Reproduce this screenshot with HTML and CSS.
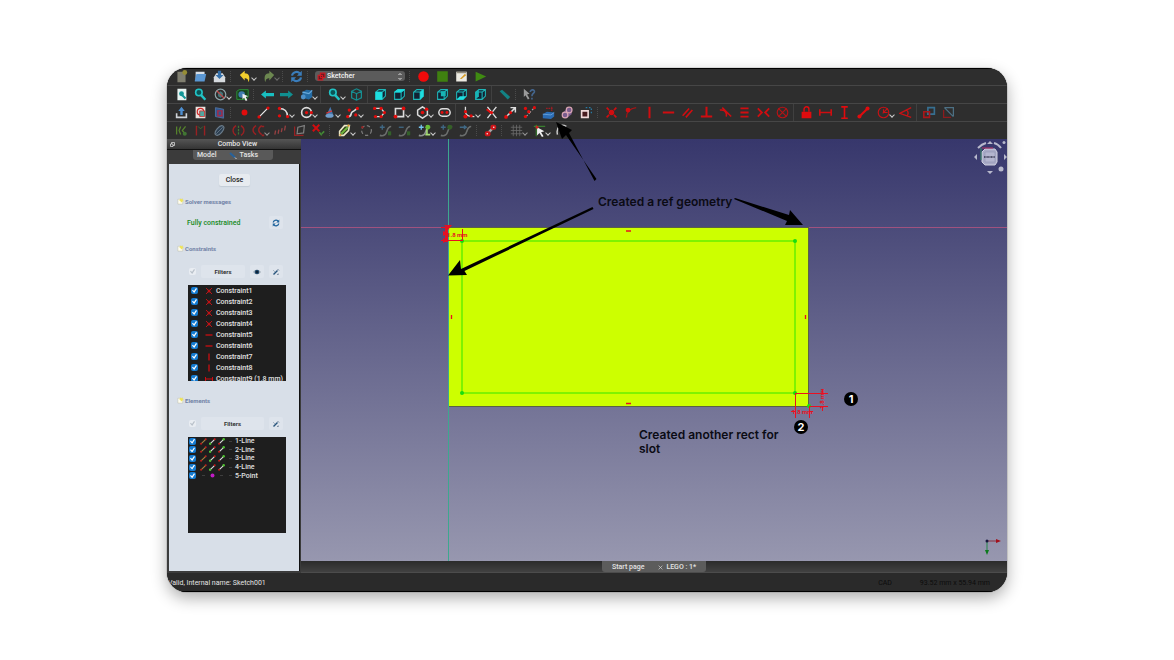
FILE: index.html
```html
<!DOCTYPE html>
<html lang="en">
<head>
<meta charset="utf-8">
<title>Sketcher</title>
<link rel="stylesheet" href="styles.css">
</head>
<body>
<svg class="defs" aria-hidden="true">
  <symbol id="cube" viewBox="0 0 16 16"><path d="M2 5l4-3h8v8l-4 4H2zM2 5h8v9M10 5l4-3" fill="#123" stroke="#1fb6b8" stroke-width="1.3"/></symbol>
  <symbol id="refresh" viewBox="0 0 16 16"><path d="M2.500 7A5.500 5 0 0 1 12 4M13.500 9A5.500 5 0 0 1 4 12" fill="none" stroke="currentColor" stroke-width="2.600"/><path d="M14.500 1v6H8.500zM1.500 15V9h6z" fill="currentColor"/></symbol>
  <symbol id="lens" viewBox="0 0 16 16"><path d="M8.500 8.500l5.500 6" stroke="#21c3c5" stroke-width="3"/><circle cx="6" cy="5.500" r="4" fill="#0b5557" stroke="#21c3c5" stroke-width="2"/></symbol>
  <symbol id="coincident" viewBox="0 0 16 16"><path d="M2 2l3 3M14 2l-3 3M2 14l3-3M14 14l-3-3" stroke="#d00d10" stroke-width="2"/><circle cx="8" cy="8" r="3.300" fill="#d00d10"/></symbol>
  <symbol id="xmark" viewBox="0 0 16 16"><path d="M2 2l12 12M14 2L2 14" stroke="#b91518" stroke-width="2"/><circle cx="8" cy="8" r="3" fill="#c01215"/></symbol>
  <symbol id="hline" viewBox="0 0 16 16"><path d="M1 8h14" stroke="#d00d10" stroke-width="2.500"/></symbol>
  <symbol id="vline" viewBox="0 0 16 16"><path d="M8 1v14" stroke="#d00d10" stroke-width="2.500"/></symbol>
  <symbol id="hdist" viewBox="0 0 16 16"><path d="M1 4v8M15 4v8M2 8h12" stroke="#d00d10" stroke-width="2"/></symbol>
  <symbol id="note" viewBox="0 0 16 16"><path d="M2 4h11v11H2z" fill="#fffef2" stroke="#bbb8a0"/><path d="M8 2l2 2 3-2v4l3 2-4 1-3 3-1-4-3-2z" fill="#efe45a"/></symbol>
  <symbol id="wand" viewBox="0 0 16 16"><path d="M3 13l8-8" stroke="#28557d" stroke-width="3"/><path d="M11 2l3 3M3 5l2 2M10 13l4-1" stroke="#71849a" stroke-width="2"/></symbol>
  <symbol id="edge-r" viewBox="0 0 16 16"><path d="M3 13L13 3" stroke="#a3803e" stroke-width="2.500"/><circle cx="2.500" cy="13" r="2.300" fill="#c0201c"/><circle cx="13" cy="3" r="2.300" fill="#c0201c"/></symbol>
  <symbol id="edge-w" viewBox="0 0 16 16"><path d="M3 13L13 3" stroke="#ddd" stroke-width="2.500"/><circle cx="2.500" cy="13" r="2.800" fill="#4fc432"/><circle cx="13" cy="3" r="2.300" fill="#d01818"/></symbol>
  <symbol id="edge-g" viewBox="0 0 16 16"><path d="M3 13L13 3" stroke="#ddd" stroke-width="2.500"/><circle cx="2.500" cy="13" r="2.300" fill="#c0201c"/><circle cx="13" cy="3" r="2.800" fill="#4fc432"/></symbol>
  <symbol id="curve" viewBox="0 0 16 16"><path d="M1 14c7 2 8-3 9-6s2-5 5-5" fill="none" stroke="#8d9190" stroke-width="2"/></symbol>
</svg>

<main class="window">
  <header class="toolbars">
    <div class="toolbar">
      <button class="tool" aria-label="New"><svg viewBox="0 0 16 16"><path d="M3 2h10v13H3z" fill="#807f70"/><circle cx="12" cy="3" r="3" fill="#968d35"/></svg></button>
      <button class="tool" aria-label="Open"><svg viewBox="0 0 16 16"><path d="M2 2h11v9H2z" fill="#d7dfe7"/><path d="M1 13L3 5h12l-2 9H1z" fill="#5b97d2"/></svg></button>
      <button class="tool" aria-label="Save"><svg viewBox="0 0 16 16"><path d="M1 9l3-5h8l3 5v6H1z" fill="#d6dade"/><path d="M6 1h4v5h3l-5 5-5-5h3z" fill="#356fa8"/></svg></button>
      <span class="grip"></span>
      <button class="tool drop" aria-label="Undo"><svg viewBox="0 0 16 16"><path d="M1 6l6-5v3c5 0 7 4 5 11-1-4-2-5-5-5v3z" fill="#f2ce2e"/></svg></button>
      <button class="tool drop dim" aria-label="Redo"><svg viewBox="0 0 16 16"><path d="M15 6L9 1v3C4 4 2 8 4 15c1-4 2-5 5-5v3z" fill="#6c8750"/></svg></button>
      <span class="grip"></span>
      <button class="tool blue" aria-label="Refresh"><svg><use href="#refresh"/></svg></button>
      <span class="grip"></span>
      <div class="workbench">
        <svg viewBox="0 0 16 16" aria-hidden="true"><path d="M2 6h8v8H2zM6 2h8v8H6z" fill="#5c1c22" stroke="#cf1720" stroke-width="2"/></svg>
        <select aria-label="Workbench"><option>Sketcher</option></select>
        <svg class="updown" viewBox="0 0 8 12" aria-hidden="true"><path d="M2 4l2-2 2 2M2 8l2 2 2-2" fill="none" stroke="#eee" stroke-width="1.200"/></svg>
      </div>
      <span class="grip"></span>
      <button class="tool" aria-label="Record"><svg viewBox="0 0 16 16"><circle cx="8" cy="8" r="6.500" fill="#f00a0a"/></svg></button>
      <button class="tool" aria-label="Stop"><svg viewBox="0 0 16 16"><path d="M1.500 1.500h13v13h-13z" fill="#3f8010"/></svg></button>
      <button class="tool" aria-label="Macros"><svg viewBox="0 0 16 16"><path d="M1.500 2h13v12h-13z" fill="#eceae2"/><path d="M2 2h12v2H2z" fill="#8f8a7c"/><path d="M6 11l6-6 2 1-6 5z" fill="#d79b23"/></svg></button>
      <button class="tool" aria-label="Run"><svg viewBox="0 0 16 16"><path d="M2 2l13 6-13 6z" fill="#3f8a12"/></svg></button>
    </div>

    <div class="toolbar">
      <button class="tool" aria-label="Fit all"><svg viewBox="0 0 16 16"><path d="M3 1h11v14H3z" fill="#e8f4f2"/><circle cx="8" cy="7" r="3" fill="#139798"/><path d="M9 9l4 4" stroke="#139798" stroke-width="2.500"/></svg></button>
      <button class="tool" aria-label="Fit selection"><svg><use href="#lens"/></svg></button>
      <button class="tool drop" aria-label="Draw style"><svg viewBox="0 0 16 16"><circle cx="8" cy="8" r="6.500" fill="none" stroke="#8fa4a8" stroke-width="1.500"/><path d="M5 6l3-2 3 2v4l-3 2-3-2z" fill="#43787b"/><path d="M3.500 3.500l9 9" stroke="#c84444" stroke-width="1.600"/></svg></button>
      <button class="tool" aria-label="Bounding box"><svg viewBox="0 0 16 16"><path d="M1 4l3-2h11v9l-3 3H1z" fill="#17431f" stroke="#2ea03c"/><circle cx="7" cy="8" r="4" fill="#407baf"/><path d="M8 7l7 3-3 1 2 4-2 1-2-4-2 2z" fill="#eee"/></svg></button>
      <span class="grip"></span>
      <button class="tool" aria-label="Back"><svg viewBox="0 0 16 16"><path d="M0 8l6-5v3h10v4H6v3z" fill="#18bfc1"/></svg></button>
      <button class="tool" aria-label="Forward"><svg viewBox="0 0 16 16"><path d="M16 8l-6-5v3H0v4h10v3z" fill="#108f90"/></svg></button>
      <button class="tool drop" aria-label="Link navigation"><svg viewBox="0 0 16 16"><path d="M3 5l5-3 7 1v8l-4 3-8-2z" fill="#246ba4"/><path d="M3 5l8 2 4-4" fill="none" stroke="#68aadb" stroke-width="1.500"/><circle cx="4" cy="11" r="3" fill="#4d91ca"/></svg></button>
      <span class="sep"></span>
      <button class="tool drop" aria-label="Zoom"><svg><use href="#lens"/></svg></button>
      <button class="tool" aria-label="Isometric"><svg viewBox="0 0 16 16"><path d="M2 4l6-3 6 3v8l-6 3-6-3zM2 4l6 3 6-3M8 7v8" fill="none" stroke="#168e91" stroke-width="1.500"/></svg></button>
      <span class="sep"></span>
      <button class="tool" aria-label="Front"><svg viewBox="0 0 16 16"><use href="#cube"/><path d="M2 5h8v9H2z" fill="#1edee0"/></svg></button>
      <button class="tool" aria-label="Top"><svg viewBox="0 0 16 16"><use href="#cube"/><path d="M2 5l4-3h8l-4 3z" fill="#1edee0" stroke="#1edee0"/></svg></button>
      <button class="tool" aria-label="Right"><svg viewBox="0 0 16 16"><use href="#cube"/><path d="M10 5l4-3v8l-4 4z" fill="#1edee0"/></svg></button>
      <span class="sep"></span>
      <button class="tool" aria-label="Rear"><svg viewBox="0 0 16 16"><use href="#cube"/><path d="M6 4h6v6H6z" fill="#17b4b6"/></svg></button>
      <button class="tool" aria-label="Bottom"><svg viewBox="0 0 16 16"><use href="#cube"/><path d="M2 14l4-4h8l-4 4z" fill="#1edee0"/></svg></button>
      <button class="tool" aria-label="Left"><svg viewBox="0 0 16 16"><use href="#cube"/><path d="M2 5l4-3v8l-4 4z" fill="#17b4b6"/></svg></button>
      <span class="sep"></span>
      <button class="tool" aria-label="Measure"><svg viewBox="0 0 16 16"><path d="M2 4l3-2 10 9-3 3z" fill="#138284"/></svg></button>
      <span class="grip"></span>
      <button class="tool" aria-label="What's this"><svg viewBox="0 0 16 16"><path d="M1 1l7 6-3 1 3 5-2 1-3-5-2 2z" fill="#9a9a9a"/><path d="M9 5c0-4 6-3 5 0-1 2-3 2-3 5M11 12v2" fill="none" stroke="#44658d" stroke-width="2"/></svg></button>
    </div>

    <div class="toolbar">
      <button class="tool" aria-label="Leave sketch"><svg viewBox="0 0 16 16"><path d="M2 9v5h12V9" fill="none" stroke="#cfd4d9" stroke-width="2"/><path d="M8 1l4 5H9.500v5h-3V6H4z" fill="#4d8ed0"/></svg></button>
      <button class="tool" aria-label="View sketch"><svg viewBox="0 0 16 16"><path d="M2 1h12v14H2z" fill="#e9e4e0"/><circle cx="8" cy="7" r="4" fill="none" stroke="#d02a2a" stroke-width="1.500"/><path d="M7 6h6v7H7z" fill="#50a6a0" stroke="#d02a2a"/></svg></button>
      <button class="tool" aria-label="View section"><svg viewBox="0 0 16 16"><path d="M3 2l10 2v11L3 13z" fill="#31578f" stroke="#5577a8"/><path d="M6 6h5v6H6z" fill="none" stroke="#a52a45" stroke-width="1.800"/></svg></button>
      <span class="grip"></span>
      <button class="tool" aria-label="Point"><svg viewBox="0 0 16 16"><circle cx="8" cy="8" r="3.600" fill="#e20c0c"/></svg></button>
      <button class="tool" aria-label="Line"><svg viewBox="0 0 16 16"><path d="M3 13L13 3" stroke="#eee" stroke-width="1.500"/><circle cx="2.500" cy="13.500" r="2" fill="#e20c0c"/><circle cx="13.500" cy="2.500" r="2" fill="#e20c0c"/></svg></button>
      <button class="tool drop" aria-label="Arc"><svg viewBox="0 0 16 16"><path d="M3 3c6 0 10 4 10 10" fill="none" stroke="#ddd" stroke-width="2"/><circle cx="3" cy="3" r="2" fill="#e20c0c"/><circle cx="3" cy="12" r="2" fill="#e20c0c"/><circle cx="13" cy="13" r="2" fill="#e20c0c"/></svg></button>
      <button class="tool drop" aria-label="Circle"><svg viewBox="0 0 16 16"><circle cx="8" cy="8" r="6" fill="none" stroke="#ddd" stroke-width="2"/><circle cx="8" cy="8" r="2" fill="#e20c0c"/><circle cx="14" cy="8" r="2" fill="#e20c0c"/></svg></button>
      <button class="tool drop" aria-label="Conic"><svg viewBox="0 0 16 16"><path d="M9 1l4 11H4z" fill="#4777ad"/><ellipse cx="8" cy="12" rx="5" ry="2.500" fill="#709dca"/><path d="M4 9l7-3" stroke="#d33" stroke-width="1.500"/></svg></button>
      <button class="tool drop" aria-label="B-spline"><svg viewBox="0 0 16 16"><path d="M2 13c6 1 3-5 6-6s4-3 6-4" fill="none" stroke="#ddd" stroke-width="2"/><g fill="#e20c0c"><circle cx="2" cy="13" r="2"/><circle cx="4" cy="5" r="2"/><circle cx="12" cy="11" r="2"/><circle cx="14" cy="3" r="2"/></g></svg></button>
      <button class="tool lead" aria-label="Polyline"><svg viewBox="0 0 16 16"><path d="M2 3h8l4 5-4 5H3" fill="none" stroke="#ddd" stroke-width="1.600"/><g fill="#e20c0c"><circle cx="2" cy="3" r="2"/><circle cx="10" cy="3" r="2"/><circle cx="14" cy="8" r="2"/><circle cx="10" cy="13" r="2"/><circle cx="3" cy="13" r="2"/></g></svg></button>
      <button class="tool drop" aria-label="Rectangle"><svg viewBox="0 0 16 16"><path d="M3 3h10v10H3z" fill="none" stroke="#ddd" stroke-width="2"/><circle cx="3" cy="13" r="2.300" fill="#e20c0c"/><circle cx="13" cy="3" r="2.300" fill="#e20c0c"/></svg></button>
      <button class="tool drop" aria-label="Polygon"><svg viewBox="0 0 16 16"><path d="M8 1l6 4v6l-6 4-6-4V5z" fill="none" stroke="#ddd" stroke-width="1.800"/><circle cx="8" cy="8" r="2.200" fill="#e20c0c"/><circle cx="13" cy="4" r="2.200" fill="#e20c0c"/></svg></button>
      <button class="tool" aria-label="Slot"><svg viewBox="0 0 16 16"><rect x="1" y="3.500" width="14" height="9" rx="4.500" fill="none" stroke="#ddd" stroke-width="1.800"/><circle cx="5" cy="8" r="1.800" fill="#e20c0c"/><circle cx="11" cy="8" r="1.800" fill="#e20c0c"/></svg></button>
      <span class="sep"></span>
      <button class="tool drop" aria-label="Fillet"><svg viewBox="0 0 16 16"><path d="M3 1v6c0 4 3 6 11 6" fill="none" stroke="#ddd" stroke-width="1.600"/><g fill="#e20c0c"><circle cx="3" cy="7" r="2"/><circle cx="3" cy="13" r="2.500"/><circle cx="10" cy="12" r="2"/></g></svg></button>
      <button class="tool" aria-label="Trim"><svg viewBox="0 0 16 16"><path d="M3 1l11 14M14 1L3 15" stroke="#ddd" stroke-width="1.700"/><path d="M2 4l5 4" stroke="#e20c0c" stroke-width="2.500"/><circle cx="8" cy="8" r="2" fill="#e20c0c"/></svg></button>
      <button class="tool" aria-label="Extend"><svg viewBox="0 0 16 16"><path d="M3 13L14 2M8 2h6v6" fill="none" stroke="#ddd" stroke-width="1.800"/><circle cx="2.500" cy="13.500" r="2.300" fill="#e20c0c"/><circle cx="8" cy="8" r="2" fill="#e20c0c"/></svg></button>
      <button class="tool" aria-label="Split"><svg viewBox="0 0 16 16"><path d="M3 14L14 2" stroke="#a9a9a9" stroke-width="1.400" stroke-dasharray="4 2"/><g fill="#e20c0c"><circle cx="3" cy="3" r="2"/><circle cx="7" cy="7" r="2"/><circle cx="14" cy="2" r="2"/><circle cx="3" cy="13" r="2"/></g></svg></button>
      <button class="tool" aria-label="External geometry"><svg viewBox="0 0 16 16"><path d="M1 10l5-3 9 1v5l-4 3-10-1z" fill="#2b6cb4"/><path d="M1 10l10 1 4-3" stroke="#6fa8dd" fill="none"/><path d="M5 3h8M12 1v5" stroke="#a01d22" stroke-width="1.400" stroke-dasharray="2 1"/></svg></button>
      <button class="tool" aria-label="Carbon copy"><svg viewBox="0 0 16 16"><path d="M2 9l6-7 6 1-1 7-6 5-5-1z" fill="#795b8d"/><circle cx="10" cy="5" r="3.500" fill="none" stroke="#d9a5b4" stroke-width="1.500"/><circle cx="5" cy="11" r="3.500" fill="none" stroke="#d9a5b4" stroke-width="1.500"/></svg></button>
      <button class="tool" aria-label="Construction mode"><svg viewBox="0 0 16 16"><path d="M2 6h8v8H2z" fill="#481c20" stroke="#f0dada" stroke-width="2"/><path d="M7 2h7v7" fill="none" stroke="#287aa3" stroke-width="1.600" stroke-dasharray="2 2"/></svg></button>
      <span class="grip"></span>
      <button class="tool" aria-label="Coincident"><svg><use href="#coincident"/></svg></button>
      <button class="tool" aria-label="Point on object"><svg viewBox="0 0 16 16"><path d="M3 14c0-7 4-11 12-12" fill="none" stroke="#a51416" stroke-width="1.700"/><circle cx="5" cy="5" r="3" fill="#d00d10"/></svg></button>
      <button class="tool" aria-label="Vertical"><svg><use href="#vline"/></svg></button>
      <button class="tool" aria-label="Horizontal"><svg><use href="#hline"/></svg></button>
      <button class="tool" aria-label="Parallel"><svg viewBox="0 0 16 16"><path d="M2 12l8-9M6 14l8-9" stroke="#d00d10" stroke-width="2"/></svg></button>
      <button class="tool" aria-label="Perpendicular"><svg viewBox="0 0 16 16"><path d="M8 1v12M1 13h14" stroke="#d00d10" stroke-width="2.500"/></svg></button>
      <button class="tool" aria-label="Tangent"><svg viewBox="0 0 16 16"><path d="M4 2l11 11M1 5c6-1 9 3 8 8" fill="none" stroke="#d00d10" stroke-width="1.800"/></svg></button>
      <button class="tool" aria-label="Equal"><svg viewBox="0 0 16 16"><path d="M3 3h10M3 8h10M3 13h10" stroke="#d00d10" stroke-width="2.200"/></svg></button>
      <button class="tool" aria-label="Symmetric"><svg viewBox="0 0 16 16"><path d="M1 3l5 5-5 5M15 3l-5 5 5 5" fill="none" stroke="#d00d10" stroke-width="2.200"/></svg></button>
      <button class="tool" aria-label="Block"><svg viewBox="0 0 16 16"><circle cx="8" cy="8" r="6.500" fill="none" stroke="#b51416" stroke-width="1.400"/><path d="M3 3l10 10M13 3L3 13" stroke="#b51416" stroke-width="1.400"/></svg></button>
      <span class="sep"></span>
      <button class="tool" aria-label="Lock"><svg viewBox="0 0 16 16"><path d="M2 7h12v8H2z" fill="#e00b0e"/><path d="M5 7V4c0-4 6-4 6 0v3" fill="none" stroke="#e00b0e" stroke-width="1.800"/></svg></button>
      <button class="tool" aria-label="Horizontal distance"><svg><use href="#hdist"/></svg></button>
      <button class="tool" aria-label="Vertical distance"><svg viewBox="0 0 16 16"><path d="M4 1h8M4 15h8M8 1v14" stroke="#e00b0e" stroke-width="2"/></svg></button>
      <button class="tool" aria-label="Distance"><svg viewBox="0 0 16 16"><path d="M3 13L13 3" stroke="#e00b0e" stroke-width="2.500"/><circle cx="3" cy="13" r="2.500" fill="#e00b0e"/><circle cx="13" cy="3" r="2.500" fill="#e00b0e"/></svg></button>
      <button class="tool drop" aria-label="Radius"><svg viewBox="0 0 16 16"><circle cx="8" cy="8" r="6.500" fill="none" stroke="#c51215" stroke-width="1.400"/><path d="M7 9l6-6M8 4v4h5" fill="none" stroke="#c51215" stroke-width="1.400"/></svg></button>
      <button class="tool" aria-label="Angle"><svg viewBox="0 0 16 16"><path d="M15 2L1 9l14 5M9 5c3 2 3 4 1 7" fill="none" stroke="#c51215" stroke-width="1.600"/></svg></button>
      <span class="sep"></span>
      <button class="tool" aria-label="Toggle driving"><svg viewBox="0 0 16 16"><path d="M6 2h8v8H6z" fill="none" stroke="#376f91" stroke-width="2"/><path d="M1 7h7v7H1z" fill="none" stroke="#a91619" stroke-width="2"/></svg></button>
      <button class="tool" aria-label="Toggle active"><svg viewBox="0 0 16 16"><path d="M3 2h11v11M3 2l11 11" fill="none" stroke="#4d7084" stroke-width="1.500"/><path d="M2 5v9h9" fill="none" stroke="#8d1b1e" stroke-width="1.500"/></svg></button>
    </div>

    <div class="toolbar">
      <button class="tool muted" aria-label="Solver conflicts"><svg viewBox="0 0 16 16"><path d="M2 3v10M7 3L5 8l2 5M13 3l-4 5 4 5" fill="none" stroke="#6bae2c" stroke-width="1.600"/><circle cx="12" cy="12" r="2.500" fill="#4a9a37"/></svg></button>
      <button class="tool muted" aria-label="Elements"><svg viewBox="0 0 16 16"><path d="M3 2v12M13 2v12" stroke="#d31a1d" stroke-width="1.700"/><path d="M5 3l3 3 3-3" fill="none" stroke="#4a9a37"/></svg></button>
      <button class="tool muted" aria-label="Internal geometry"><svg viewBox="0 0 16 16"><ellipse cx="8" cy="8" rx="7" ry="3.500" transform="rotate(-50 8 8)" fill="#2d4965" stroke="#8ca6bc" stroke-width="1.500"/><path d="M4 12l8-8" stroke="#8ca6bc"/></svg></button>
      <button class="tool muted" aria-label="Symmetry"><svg viewBox="0 0 16 16"><path d="M5 2c-5 3-5 9 0 12M11 2c5 3 5 9 0 12" fill="none" stroke="#d31a1d" stroke-width="1.600"/><path d="M8 2v12" stroke="#4a9a37" stroke-width="1.500" stroke-dasharray="3 1"/></svg></button>
      <button class="tool drop muted" aria-label="Clone"><svg viewBox="0 0 16 16"><path d="M5 2c-5 3-5 8 0 11M12 2c-5 3-5 8 0 11" fill="none" stroke="#d31a1d" stroke-width="1.700"/><path d="M12 3h3M12 14h3" stroke="#d31a1d" stroke-width="2"/></svg></button>
      <button class="tool muted" aria-label="Array"><svg viewBox="0 0 16 16"><path d="M1 13l1-5M5 12l1-5M9 10l1-5M13 8l1-6" stroke="#d04a4c" stroke-width="1.600"/></svg></button>
      <button class="tool muted" aria-label="Remove axes"><svg viewBox="0 0 16 16"><path d="M6 4l8-2-1 9-8 1z" fill="none" stroke="#aaa" stroke-width="1.500"/><path d="M2 3v11h11" fill="none" stroke="#d31a1d" stroke-width="1.500"/></svg></button>
      <button class="tool" aria-label="Delete constraints"><svg viewBox="0 0 16 16"><path d="M1 1l8 8M9 1L1 9" stroke="#d00d10" stroke-width="2.400"/><path d="M9 10l3 4M15 9l-3 3" stroke="#438a34" stroke-width="2"/></svg></button>
      <span class="grip"></span>
      <button class="tool drop" aria-label="B-spline degree"><svg viewBox="0 0 16 16"><path d="M2 9l6-7h6l-1 6-6 6H2z" fill="#33421e" stroke="#ece9c8" stroke-width="2"/><path d="M4 12l8-8" stroke="#71b83c" stroke-width="2.500"/><path d="M12 1l2 2M2 13l2 1" stroke="#de972a" stroke-width="2"/></svg></button>
      <button class="tool muted" aria-label="Control polygon"><svg viewBox="0 0 16 16"><circle cx="8" cy="8" r="6" fill="none" stroke="#aaa" stroke-width="1.500" stroke-dasharray="4 3"/><circle cx="3" cy="4" r="1.500" fill="#c22"/></svg></button>
      <button class="tool muted" aria-label="Increase degree"><svg viewBox="0 0 16 16"><use href="#curve"/><path d="M1 4h6M4 1v6" stroke="#4a88b4" stroke-width="1.600"/><path d="M11 9h4v5h-4z" fill="#367d29"/></svg></button>
      <button class="tool muted" aria-label="Decrease degree"><svg viewBox="0 0 16 16"><use href="#curve"/><path d="M1 4h6" stroke="#4a88b4" stroke-width="1.600"/><path d="M11 9h4v5h-4z" fill="#367d29"/></svg></button>
      <button class="tool drop" aria-label="Increase multiplicity"><svg viewBox="0 0 16 16"><use href="#curve"/><path d="M1 4h6M4 1v6" stroke="#75c5f0" stroke-width="1.600"/><path d="M11 2v12M9 13h6" stroke="#a6dc75" stroke-width="2"/><circle cx="12" cy="4" r="3" fill="#68be36"/></svg></button>
      <button class="tool muted" aria-label="Insert knot"><svg viewBox="0 0 16 16"><use href="#curve"/><path d="M1 4h6M4 1v6" stroke="#4a88b4" stroke-width="1.600"/><circle cx="12" cy="4" r="3" fill="#397c23"/></svg></button>
      <button class="tool muted" aria-label="Join curves"><svg viewBox="0 0 16 16"><use href="#curve"/><path d="M1 4h8M6 2l3 2-3 2" fill="none" stroke="#4a88b4" stroke-width="1.600"/></svg></button>
      <span class="grip"></span>
      <button class="tool" aria-label="Virtual space"><svg viewBox="0 0 16 16"><path d="M3 13L13 3" stroke="#a8a8a8" stroke-width="3"/><rect x="8" y="1" width="7" height="6" rx="2" fill="#ce1519"/><rect x="1" y="9" width="7" height="6" rx="2" fill="#ce1519"/><circle cx="12" cy="4" r="1" fill="#eee"/><circle cx="4" cy="12" r="1" fill="#eee"/></svg></button>
      <span class="grip"></span>
      <button class="tool drop muted" aria-label="Grid"><svg viewBox="0 0 16 16"><path d="M4 1v14M8 1v14M12 1v14M1 4h14M1 8h14M1 12h14" stroke="#8b8b8b"/></svg></button>
      <button class="tool drop" aria-label="Snap"><svg viewBox="0 0 16 16"><path d="M1 3h14M4 1v14" stroke="#397e2f" stroke-width="1.400"/><path d="M5 4l9 5-4 1 3 5-2 1-3-5-3 3z" fill="#eee"/><circle cx="5" cy="4" r="1.700" fill="#c22"/></svg></button>
      <button class="tool" aria-label="Rendering order"><svg viewBox="0 0 16 16"><path d="M14 3C7-1 1 4 3 13" fill="none" stroke="#ccc" stroke-width="1.800"/></svg></button>
    </div>
  </header>

  <div class="workspace">
    <aside class="combo">
      <h1 class="dock-title"><svg viewBox="0 0 10 10" aria-hidden="true"><path d="M1 4h5v5H1zM3 4V1h6v6H6" fill="none" stroke="#ddd" stroke-width="1.500"/></svg><span>Combo View</span></h1>
      <nav class="tabs">
        <button>Model</button>
        <button><svg viewBox="0 0 16 16" aria-hidden="true"><path d="M2 2l10 9" stroke="#27629c" stroke-width="4"/><path d="M12 11l3 3" stroke="#d9d9d9" stroke-width="2"/></svg>Tasks</button>
      </nav>
      <div class="panel">
        <button class="close">Close</button>

        <section class="group">
          <h2><svg aria-hidden="true"><use href="#note"/></svg>Solver messages</h2>
          <div class="solver">
            <p>Fully constrained</p>
            <button class="mini" aria-label="Recompute"><svg><use href="#refresh"/></svg></button>
          </div>
        </section>

        <section class="group constraints">
          <h2><svg aria-hidden="true"><use href="#note"/></svg>Constraints</h2>
          <div class="filters">
            <input type="checkbox" class="pale" checked aria-label="Filter constraints">
            <button class="filter">Filters</button>
            <button class="mini" aria-label="Show or hide"><svg viewBox="0 0 16 16"><path d="M0 8c4-6 12-6 16 0-4 6-12 6-16 0z" fill="#a9b5bf"/><circle cx="8" cy="8" r="4.500" fill="#1d4568"/><circle cx="8" cy="8" r="2" fill="#0c1b29"/></svg></button>
            <button class="mini" aria-label="Constraint settings"><svg><use href="#wand"/></svg></button>
          </div>
          <ul class="list">
            <li><label><input type="checkbox" checked><svg><use href="#xmark"/></svg><span>Constraint1</span></label></li>
            <li><label><input type="checkbox" checked><svg><use href="#xmark"/></svg><span>Constraint2</span></label></li>
            <li><label><input type="checkbox" checked><svg><use href="#xmark"/></svg><span>Constraint3</span></label></li>
            <li><label><input type="checkbox" checked><svg><use href="#xmark"/></svg><span>Constraint4</span></label></li>
            <li><label><input type="checkbox" checked><svg><use href="#hline"/></svg><span>Constraint5</span></label></li>
            <li><label><input type="checkbox" checked><svg><use href="#hline"/></svg><span>Constraint6</span></label></li>
            <li><label><input type="checkbox" checked><svg><use href="#vline"/></svg><span>Constraint7</span></label></li>
            <li><label><input type="checkbox" checked><svg><use href="#vline"/></svg><span>Constraint8</span></label></li>
            <li><label><input type="checkbox" checked><svg><use href="#hdist"/></svg><span>Constraint9 (1.8 mm)</span></label></li>
          </ul>
        </section>

        <section class="group elements">
          <h2><svg aria-hidden="true"><use href="#note"/></svg>Elements</h2>
          <div class="filters">
            <input type="checkbox" class="pale" checked aria-label="Filter elements">
            <button class="filter">Filters</button>
            <button class="mini" aria-label="Element settings"><svg><use href="#wand"/></svg></button>
          </div>
          <div class="listbox">
            <ul class="element-list">
              <li><label><input type="checkbox" checked><svg><use href="#edge-r"/></svg><svg><use href="#edge-w"/></svg><svg><use href="#edge-g"/></svg><i></i>1-Line</label></li>
              <li><label><input type="checkbox" checked><svg><use href="#edge-r"/></svg><svg><use href="#edge-w"/></svg><svg><use href="#edge-g"/></svg><i></i>2-Line</label></li>
              <li><label><input type="checkbox" checked><svg><use href="#edge-r"/></svg><svg><use href="#edge-w"/></svg><svg><use href="#edge-g"/></svg><i></i>3-Line</label></li>
              <li><label><input type="checkbox" checked><svg><use href="#edge-r"/></svg><svg><use href="#edge-w"/></svg><svg><use href="#edge-g"/></svg><i></i>4-Line</label></li>
              <li><label><input type="checkbox" checked><i></i><svg viewBox="0 0 16 16"><circle cx="8" cy="8" r="4.500" fill="#c21cc4"/></svg><i></i><i></i>5-Point</label></li>
            </ul>
          </div>
        </section>
      </div>
    </aside>

    <section class="document">
      <div class="view">
        <svg class="drawing" role="img" aria-label="Sketch of a rectangle with an inner slot">
          <path d="M0 88.500H148M508 88.500H2000" stroke="#a0527f" fill="none"/>
          <path d="M147.500 0V2000" stroke="#3da78f" fill="none"/>
          <rect x="148" y="89" width="360" height="178" fill="#cdff00"/>
          <path d="M148 88.500H508M507.500 89V267.500H148" fill="none" stroke="#5a6244"/>
          <rect x="161" y="102" width="333" height="152" fill="none" stroke="#64ef00" stroke-width="1.500"/>
          <g fill="#18dd10"><circle cx="161" cy="102" r="2"/><circle cx="494" cy="102" r="2"/><circle cx="161" cy="254" r="2"/><circle cx="494" cy="254" r="2"/><circle cx="508" cy="267" r="2"/></g>
          <g stroke="#ea1020" fill="none">
            <path d="M325 92h5M325 264.500h5M150.500 176v4M504.500 176v4" stroke-width="1.300"/>
            <path d="M148 101.500h13M161.500 90v12M140 101.500h8M140 88.500h8"/>
            <path d="M494.500 254v25M508.500 267v12M490 272.500h4M508 272.500h4M494 254.500h33M508 267.500h19M521.500 250v4M521.500 268v4"/>
          </g>
          <path d="M143 86h8l-4 5zM142 92l5 2-5 3zM142 99l5 2-5 3zM144 88h3v15h-3z" fill="#e51024"/>
          <g class="dims">
            <text x="146" y="98">1.8 mm</text>
            <text x="491" y="275">1.8 mm</text>
            <text transform="translate(523 270) rotate(-90)">1.8 mm</text>
          </g>
          <g fill="#000">
            <path d="M295.500 40L265 -4L261 0L255 -17L271 -9L268 -6L293.500 42Z"/>
            <path d="M291.500 68L160 130L159 121L147 136.500L166 136L163.500 132L292.500 70Z"/>
            <path d="M433 60L486 82L484 86L502 86L489 71L488 76L434 59Z"/>
          </g>
          <g class="notes">
            <text x="297" y="67">Created a ref geometry</text>
            <text x="338" y="300">Created another rect for</text>
            <text x="338" y="314">slot</text>
          </g>
          <circle cx="550" cy="260" r="7" fill="#000"/><circle cx="500" cy="288" r="7" fill="#000"/>
          <g class="badges"><text x="550" y="264">1</text><text x="500" y="292">2</text></g>
        </svg>
        <svg class="navcube" viewBox="0 0 34 36" aria-hidden="true">
          <g fill="none" stroke="#b8b9cc" stroke-width="2"><path d="M5 8q4-4 8-5M21 3q4 1 7 5"/></g>
          <path d="M14 4l3-3 3 3zM4 14v6l-3-3zM31 14v6l3-3zM14 31h6l-3 3z" fill="#b8b9cc"/>
          <path d="M12 9h10l2 3v10l-2 3H12l-3-3V12z" fill="#a9aac6" stroke="#cfd0e0"/>
          <path d="M12 12h10v10H12z" fill="#b4b5cf" stroke="#9293b2" stroke-width=".6"/>
          <path d="M8 20V8" stroke="#3a8e68"/><path d="M9 8h11" stroke="#bb3563"/><path d="M11 17h11" stroke="#35364f" stroke-width="1.500" stroke-dasharray="1 .4"/>
          <circle cx="31" cy="2.500" r="1.500" fill="#b8b9cc"/><circle cx="28" cy="29" r="2.500" fill="#b8b9cc"/>
        </svg>
        <svg class="axes" viewBox="0 0 18 18" aria-hidden="true"><path d="M2 3h10" stroke="#8a3040"/><path d="M11 1l5 2-5 2z" fill="#a3101c"/><path d="M2 3v10" stroke="#24864a"/><path d="M0 12h4l-2 5z" fill="#0b7a1c"/><circle cx="2" cy="3" r="1.500" fill="#15153c"/></svg>
      </div>
      <nav class="doc-tabs">
        <div>
          <button>Start page</button>
          <button><svg viewBox="0 0 8 8" aria-hidden="true"><path d="M1 1l6 6M7 1L1 7" stroke="#ddd"/></svg>LEGO : 1*</button>
        </div>
      </nav>
    </section>
  </div>

  <footer class="status">
    <span>Valid, Internal name: Sketch001</span>
    <span class="nav-style">CAD</span>
    <span class="size">93.52 mm x 55.94 mm</span>
  </footer>
</main>
</body>
</html>
```
FILE: styles.css
```css
* { box-sizing: border-box; }

body {
  margin: 0;
  min-height: 100vh;
  padding: 68px 167px;
  display: flex;
  background: #fff;
  font-family: Roboto, "Liberation Sans", sans-serif;
  font-size: 7px;
  line-height: 9px;
}

h1, h2, p, ul { margin: 0; padding: 0; font-size: inherit; font-weight: 500; }
ul { list-style: none; }
button, input, select { margin: 0; padding: 0; border: 0; font: inherit; color: inherit; background: none; }
svg { display: block; flex: none; }
.defs { position: absolute; width: 0; height: 0; }

.window {
  flex: 1;
  min-width: 0;
  display: flex;
  flex-direction: column;
  overflow: hidden;
  border-radius: 20px;
  background: #2d2d2d;
  color: #e4e4e4;
  box-shadow: 0 0 1px #000, 0 6px 16px rgba(0, 0, 0, .32);
}

/* Toolbars */
.toolbars { border-top: 1px solid #000; background: #2e2e2e; }
.toolbar {
  height: 18px;
  padding-left: 8px;
  display: flex;
  align-items: center;
  gap: 6px;
  border-bottom: 1px solid #464646;
}
.toolbar:first-child { height: 17px; padding-bottom: 2px; }
.toolbar:last-child { height: 17px; border-bottom: 0; }
.tool { flex: none; width: 13px; height: 13px; display: flex; align-items: center; }
.tool svg { width: 13px; height: 13px; }
.drop { width: 17px; padding-left: 1px; }
.drop::after {
  content: "";
  flex: none;
  width: 3px;
  height: 3px;
  margin-top: 4px;
  border: solid #ccc;
  border-width: 0 1px 1px 0;
  rotate: 45deg;
}
.lead { margin-left: 5px; }
.muted { opacity: .65; }
.dim::after { opacity: .4; }
.blue { color: #3a7dbb; }
.grip { flex: none; width: 4px; height: 11px; margin: 0 -2px; border-left: 1px dotted #4b4b4b; }
.sep { flex: none; width: 3px; height: 17px; margin: 0 -2px; border-left: 1px solid #404040; }

.workbench {
  width: 90px;
  height: 10px;
  padding: 0 2px;
  display: flex;
  align-items: center;
  gap: 1px;
  border-radius: 3px;
  background: #5b5b5b;
}
.workbench svg { width: 9px; height: 9px; }
.workbench .updown { width: 6px; }
.workbench select { flex: 1; min-width: 0; appearance: none; font-weight: 500; color: #f2f2f2; }

/* Combo view */
.workspace { flex: 1; min-height: 0; display: flex; }
.combo {
  flex: none;
  width: 134px;
  display: flex;
  flex-direction: column;
  padding: 0 1px 2px 2px;
  background: #3b3b3b;
}
.dock-title {
  height: 11px;
  margin: 0 -1px 0 -2px;
  padding: 1px 1px 0 3px;
  display: flex;
  align-items: center;
  background: linear-gradient(#555, #343434);
  border-bottom: 1px solid #111;
}
.dock-title svg { width: 5px; height: 5px; }
.dock-title span { flex: 1; text-align: center; }
.tabs {
  height: 10px;
  margin: 0 27px 4px 24px;
  padding: 1px 4px 0;
  display: flex;
  gap: 12px;
  border-radius: 0 0 3px 3px;
  background: #595959;
  font-weight: 500;
}
.tabs button { display: flex; align-items: center; gap: 3px; }
.tabs svg { width: 8px; height: 8px; }
.panel {
  flex: 1;
  min-height: 0;
  padding: 10px 13px 0 8px;
  border-right: 1px solid #111;
  background: #d8dfe8;
  color: #222;
  overflow: hidden;
}
.close {
  display: block;
  width: 31px;
  height: 12px;
  margin: 0 auto 10px 42px;
  border-radius: 2px;
  background: #e7ebf0;
  box-shadow: 0 1px 1px #c4ccd6;
  font-weight: 500;
}
.group h2 { display: flex; align-items: center; height: 10px; gap: 1px; color: #7182a6; font-size: 6px; font-weight: 700; }
.group h2 svg { width: 7px; height: 8px; }
.solver { display: flex; align-items: center; justify-content: space-between; padding: 10px 3px 14px 10px; color: #168a1d; font-weight: 500; }
.solver p { padding-top: 2px; }
.mini {
  width: 14px;
  height: 13px;
  display: grid;
  place-items: center;
  border-radius: 2px;
  background: #dee4ec;
  color: #21659d;
}
.mini svg { width: 8px; height: 8px; }
.filters { display: flex; align-items: center; gap: 5px; padding: 12px 3px 7px 12px; font-size: 6px; }
.filter { flex: 1; height: 13px; border-radius: 2px; background: #dee4ec; font-weight: 700; color: #333; }
.elements { padding-top: 14px; }

input[type="checkbox"] {
  appearance: none;
  flex: none;
  width: 7px;
  height: 7px;
  display: grid;
  place-items: center;
  border-radius: 2px;
  background: #147bd1;
}
input[type="checkbox"]::after {
  content: "";
  width: 5px;
  height: 5px;
  background: #fff;
  clip-path: polygon(0 50%, 18% 36%, 40% 62%, 80% 0, 100% 14%, 44% 100%);
}
input.pale { background: #e9edf2; }
input.pale::after { background: #b9c1ca; }

.list, .listbox {
  height: 96px;
  margin-left: 11px;
  overflow: hidden;
  background: #1e1e1e;
  color: #e2e2e2;
  font-weight: 500;
}
.list label { height: 11px; padding-left: 3px; display: flex; align-items: center; white-space: nowrap; }
.list svg { width: 8px; height: 8px; margin: 0 3px 0 7px; }
.list span { padding-top: 2px; }
.element-list { height: 43px; padding-left: 1px; display: grid; grid-auto-rows: 1fr; }
.element-list label { height: 100%; display: grid; grid-template-columns: 11px 9px 9px 9px 8px 1fr; align-items: center; line-height: 8px; }
.element-list svg { width: 7px; height: 7px; }
.element-list i { width: 3px; height: 1px; margin-left: 2px; background: #3e3e3e; }

/* Document */
.document { flex: 1; min-width: 0; display: flex; flex-direction: column; }
.view { flex: 1; min-height: 0; position: relative; background: linear-gradient(#37376c, #9797af); }
.drawing { position: absolute; inset: 0; width: 100%; height: 100%; overflow: visible; z-index: 1; }
.navcube { position: absolute; top: 1px; right: 0; width: 34px; height: 36px; }
.axes { position: absolute; right: 4px; bottom: 5px; width: 18px; height: 18px; }
.notes { font-family: Inter, sans-serif; font-size: 12px; font-weight: 600; fill: #0b0b14; }
.dims { font-size: 6px; font-weight: 700; fill: #e81020; }
.badges { font-family: Inter, sans-serif; font-size: 11px; font-weight: 700; fill: #fff; text-anchor: middle; }

.doc-tabs {
  height: 12px;
  position: relative;
  z-index: 2;
  display: flex;
  justify-content: center;
  background: linear-gradient(#2b2b2b, #414141);
  border-bottom: 1px solid #4c4c4c;
}
.doc-tabs div { display: flex; gap: 14px; padding: 1px 10px 0; border-radius: 0 0 3px 3px; background: #5c5c5c; }
.doc-tabs button { display: flex; align-items: center; gap: 3px; font-weight: 500; }
.doc-tabs svg { width: 5px; height: 5px; }

.status {
  height: 19px;
  position: relative;
  z-index: 2;
  padding: 2px 17px 0 1px;
  display: flex;
  align-items: center;
  background: #2a2a2a;
  border-bottom: 1px solid #000;
}
.nav-style { margin-left: auto; margin-right: 28px; color: #0c0c0c; }
.size { color: #0c0c0c; }
```
